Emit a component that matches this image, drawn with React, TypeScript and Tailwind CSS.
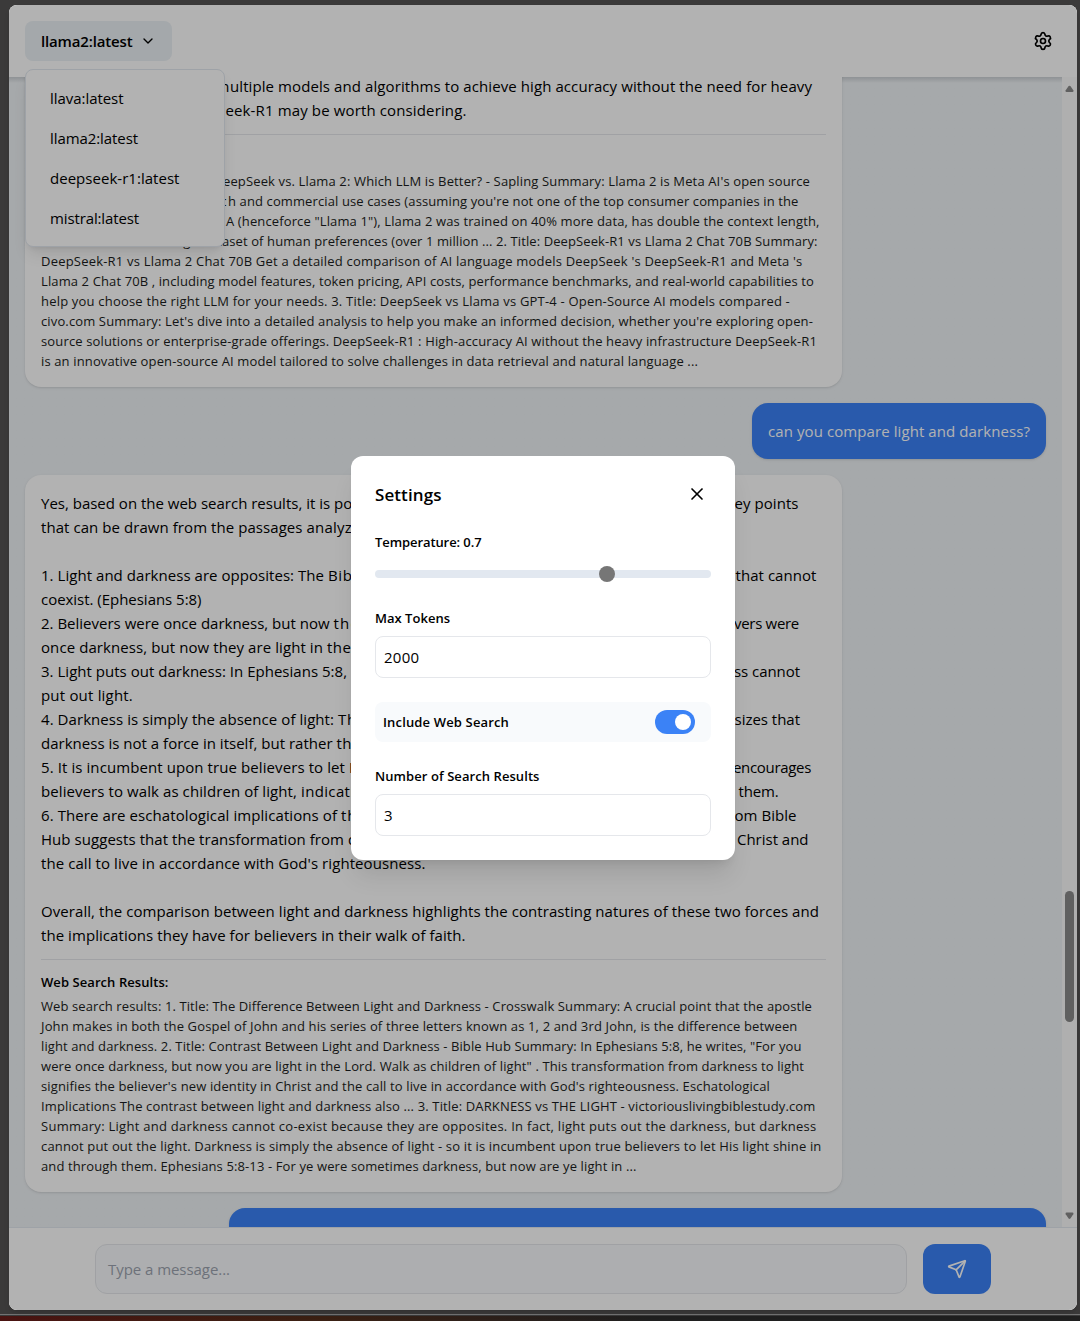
import React, { useLayoutEffect, useRef, useState } from "react";
import { ChevronDown, Send, Settings, X } from "lucide-react";

type Segment = [text: string, end: number];
type Line = Segment[];

const TEXT_START = 41;

/** A run of text whose tracking is adjusted so that it fills the given width. */
function Fit({ width, children }: { width: number; children: string }) {
  const ref = useRef<HTMLSpanElement>(null);
  const [spacing, setSpacing] = useState(0);
  useLayoutEffect(() => {
    if (ref.current) {
      const natural = ref.current.getBoundingClientRect().width;
      setSpacing((width - natural) / children.length);
    }
  }, []);
  return (
    <span ref={ref} className="inline-block whitespace-pre" style={{ letterSpacing: `${spacing}px` }}>
      {children}
    </span>
  );
}

function Lines({ lines }: { lines: Line[] }) {
  return (
    <>
      {lines.map((line, i) => (
        <div key={i} className="flex h-[1lh] whitespace-pre">
          {line.map(([text, end], j) => (
            <Fit key={j} width={end - (j === 0 ? TEXT_START : line[j - 1][1])}>
              {text}
            </Fit>
          ))}
        </div>
      ))}
    </>
  );
}

const firstAnswer: Line[] = [
  [["approach that can use m", 230], ["ultiple models and algorithms to achieve high accuracy without the need for heavy", 812]],
  [["infrastructure, DeepS", 225.5], ["eek-R1 may be worth considering.", 466.5]],
];

const firstSources: Line[] = [
  [["Web search results: 1. Title: D", 223], ["eepSeek vs. Llama 2: Which LLM is Better? - Sapling Summary: Llama 2 is Meta AI's open source", 810]],
  [["LLM available for researc", 228], ["h and commercial use cases (assuming you're not one of the top consumer companies in the", 798.5]],
  [["world). Compared to LLaM", 226], ["A (henceforce \"Llama 1\"), Llama 2 was trained on 40% more data, has double the context length,", 819.5]],
  [["and was tuned on a large dat", 222], ["aset of human preferences (over 1 million ... 2. Title: DeepSeek-R1 vs Llama 2 Chat 70B Summary:", 817.5]],
  [["DeepSeek-R1 vs Llama 2 Chat 70B Get a detailed comparison of AI language models DeepSeek 's DeepSeek-R1 and Meta 's", 802.5]],
  [["Llama 2 Chat 70B , including model features, token pricing, API costs, performance benchmarks, and real-world capabilities to", 814]],
  [["help you choose the right LLM for your needs. 3. Title: DeepSeek vs Llama vs GPT-4 - Open-Source AI models compared -", 790]],
  [["civo.com Summary: Let's dive into a detailed analysis to help you make an informed decision, whether you're exploring open-", 813]],
  [["source solutions or enterprise-grade offerings. DeepSeek-R1 : High-accuracy AI without the heavy infrastructure DeepSeek-R1", 817]],
  [["is an innovative open-source AI model tailored to solve challenges in data retrieval and natural language ...", 698]],
];

const secondAnswer: Line[] = [
  [["Yes, based on the web search results, it is ", 334], ["possible to compare light and darkness. Here are some k", 734.5], ["ey points", 798.5]],
  [["that can be drawn from the passages ", 306.5], ["analyzed:", 374]],
  [[" ", 45]],
  [["1. Light and darkness are opposites: The ", 328], ["Bible describes light and darkness as opposing forces ", 735.5], ["that cannot", 816.5]],
  [["coexist. (Ephesians 5:8)", 201.5]],
  [["2. Believers were once darkness, but now ", 333.5], ["they are light: Ephesians 5:8 states that the belie", 734], ["vers were", 799]],
  [["once darkness, but now they are light in ", 327], ["the Lord. (Ephesians 5:8)", 510]],
  [["3. Light puts out darkness: In Ephesians 5:8, ", 351], ["Paul writes that light puts out darkness, but darkne", 734], ["ss cannot", 800]],
  [["put out light.", 133]],
  [["4. Darkness is simply the absence of light: ", 338], ["The author of the passage, in addition, also empha", 734.5], ["sizes that", 800]],
  [["darkness is not a force in itself, but rather ", 336.5], ["the absence of light.", 485]],
  [["5. It is incumbent upon true believers to let ", 349], ["His light shine in and through them: The author ", 733], ["encourages", 811]],
  [["believers to walk as children of light, ", 301], ["indicating that they are to let the light shine in and through ", 738.5], ["them.", 778.5]],
  [["6. There are eschatological implications of ", 341], ["the contrast of light and darkness: The passage fr", 734.5], ["om Bible", 796.5]],
  [["Hub suggests that the transformation from ", 348], ["darkness to light signifies the new identity in the ", 737], ["Christ and", 808.5]],
  [["the call to live in accordance with God's righteousness.", 425.5]],
  [[" ", 45]],
  [["Overall, the comparison between light and darkness highlights the contrasting natures of these two forces and", 819]],
  [["the implications they have for believers in their walk of faith.", 465.5]],
];

const secondSources: Line[] = [
  [["Web search results: 1. Title: The Difference Between Light and Darkness - Crosswalk Summary: A crucial point that the apostle", 812]],
  [["John makes in both the Gospel of John and his series of three letters known as 1, 2 and 3rd John, is the difference between", 797.5]],
  [["light and darkness. 2. Title: Contrast Between Light and Darkness - Bible Hub Summary: In Ephesians 5:8, he writes, \"For you", 801.5]],
  [["were once darkness, but now you are light in the Lord. Walk as children of light\" . This transformation from darkness to light", 804]],
  [["signifies the believer's new identity in Christ and the call to live in accordance with God's righteousness. Eschatological", 770]],
  [["Implications The contrast between light and darkness also ... 3. Title: DARKNESS vs THE LIGHT - victoriouslivingbiblestudy.com", 815.5]],
  [["Summary: Light and darkness cannot co-exist because they are opposites. In fact, light puts out the darkness, but darkness", 816.5]],
  [["cannot put out the light. Darkness is simply the absence of light - so it is incumbent upon true believers to let His light shine in", 821.5]],
  [["and through them. Ephesians 5:8-13 - For ye were sometimes darkness, but now are ye light in ...", 636.5]],
];

const models: [string, number][] = [
  ["llava:latest", 73.5],
  ["llama2:latest", 88],
  ["deepseek-r1:latest", 129.5],
  ["mistral:latest", 89],
];

function Answer({ text, sources }: { text: Line[]; sources: Line[] }) {
  return (
    <div className="w-[817px] rounded-[16px] bg-white p-4 shadow-sm">
      <div className="text-[15px] leading-6">
        <Lines lines={text} />
      </div>
      <div className="mt-3 border-t border-gray-200 pt-3 text-[13px] leading-5">
        <div className="mb-1 font-semibold">
          <Fit width={127.5}>Web Search Results:</Fit>
        </div>
        <div className="text-[#1b1d21]">
          <Lines lines={sources} />
        </div>
      </div>
    </div>
  );
}

function Label({ width, children }: { width: number; children: string }) {
  return (
    <div className="text-[13px] leading-5 font-semibold">
      <Fit width={width}>{children}</Fit>
    </div>
  );
}

function Field({ width, value }: { width: number; value: string }) {
  return (
    <div className="mt-2 flex h-[42px] items-center rounded-lg border border-gray-200 px-2 text-[15px] leading-6">
      <Fit width={width}>{value}</Fit>
    </div>
  );
}

function SettingsModal() {
  return (
    <div className="absolute top-[451px] left-[342px] z-30 h-[404px] w-96 rounded-xl bg-white p-6 shadow-xl">
      <div className="flex h-7 items-center justify-between">
        <h2 className="pt-0.5 text-[17px] leading-7 font-semibold">
          <Fit width={66.5}>Settings</Fit>
        </h2>
        <button className="p-1">
          <X size={20} />
        </button>
      </div>
      <div className="mt-6">
        <Label width={106.5}>Temperature: 0.7</Label>
        <div className="mt-[14px] flex h-4 items-center">
          <div className="flex h-2 w-full items-center rounded-full bg-slate-200">
            <div className="ml-[224px] size-[15.5px] rounded-full bg-[#767676]" />
          </div>
        </div>
      </div>
      <div className="mt-[26px]">
        <Label width={75}>Max Tokens</Label>
        <Field width={35.5} value="2000" />
      </div>
      <div className="mt-6 flex h-10 items-center justify-between rounded-lg bg-slate-50 pr-4 pl-2">
        <Label width={126}>Include Web Search</Label>
        <div className="flex h-6 w-10 items-center justify-end rounded-full bg-[#3b82f6] px-1">
          <div className="size-4 rounded-full bg-white" />
        </div>
      </div>
      <div className="mt-6">
        <Label width={164.5}>Number of Search Results</Label>
        <Field width={8.5} value="3" />
      </div>
    </div>
  );
}

export default function App() {
  return (
    <div className="flex h-[1321px] w-[1080px] flex-col overflow-hidden bg-[#3b3a3a] pt-[5px] font-['Open_Sans','Noto_Sans',sans-serif] text-black">
      <div className="relative ml-[9px] flex h-[1305px] w-[1068px] flex-col overflow-hidden rounded-lg bg-white shadow-md">
        <header className="flex h-[72px] shrink-0 items-center justify-between bg-white px-4">
          <button className="flex h-10 w-[147px] items-center gap-[7px] rounded-lg bg-[#ebf1f5] px-4 text-[15px] leading-6 font-semibold">
            <Fit width={91.5}>llama2:latest</Fit>
            <ChevronDown size={16} className="shrink-0" />
          </button>
          <button className="p-2">
            <Settings size={20} />
          </button>
        </header>

        <main className="flex h-[1150px] shrink-0 overflow-hidden">
          <div className="flex w-[1053px] flex-col gap-4 bg-[#eef2f5] bg-linear-to-b from-[#cdd2d6] to-[#eef2f5] to-[6px] pr-4 pl-4">
            <div className="-mt-[19px]">
              <Answer text={firstAnswer} sources={firstSources} />
            </div>
            <div className="flex h-14 w-[294px] shrink-0 items-center self-end rounded-[16px] bg-[#3b82f6] px-4 text-[15px] leading-6 text-white shadow-sm">
              <Fit width={262}>can you compare light and darkness?</Fit>
            </div>
            <Answer text={secondAnswer} sources={secondSources} />
            <div className="h-14 w-[817px] shrink-0 self-end rounded-[16px] bg-[#3b82f6] shadow-sm" />
          </div>
          <div className="flex w-[15px] flex-col items-center bg-[#fbfbfb]">
            <svg width="9" height="8" viewBox="0 0 10 8" className="mt-2 shrink-0" fill="#8a8a8a">
              <path d="M4 .8Q5-.2 6 .8L9.2 5.5Q10 7.3 8.5 7.3H1.5Q0 7.3.8 5.5Z" />
            </svg>
            <div className="mt-[798px] h-[131px] w-[9px] shrink-0 rounded-full bg-[#8a8a8a]" />
            <svg width="9" height="8" viewBox="0 0 10 8" className="mt-auto mb-[7px] shrink-0" fill="#8a8a8a">
              <path d="M4 6.7Q5 7.7 6 6.7L9.2 2Q10 .2 8.5.2H1.5Q0 .2.8 2Z" />
            </svg>
          </div>
        </main>

        <footer className="flex grow gap-4 border-t border-slate-200 bg-white pt-4 pl-[86px]">
          <div className="flex h-[50px] w-[812px] items-center rounded-xl border border-gray-200 bg-slate-50 px-3 text-[15px] leading-6 text-[#9ca3af]">
            <Fit width={122}>Type a message...</Fit>
          </div>
          <button className="flex h-[50px] w-[68px] items-center justify-center rounded-xl bg-[#3b82f6] text-white">
            <Send size={20} />
          </button>
        </footer>

        <div className="absolute top-16 left-4 z-10 h-[178px] w-[200px] rounded-lg border border-slate-200 bg-white p-2 shadow-lg">
          {models.map(([name, width]) => (
            <div key={name} className="flex h-10 items-center px-4 text-[15px] leading-6">
              <Fit width={width}>{name}</Fit>
            </div>
          ))}
        </div>

        <div className="absolute inset-0 z-20 bg-black/30" />
        <SettingsModal />
      </div>
      <div className="mt-1 h-px bg-[#737373]" />
      <div className="h-px bg-[#3a3a3a]" />
      <div className="grow bg-linear-to-r from-[#4a1311] via-[#3a2013] via-30% to-[#1f1f1f] to-60%" />
    </div>
  );
}
